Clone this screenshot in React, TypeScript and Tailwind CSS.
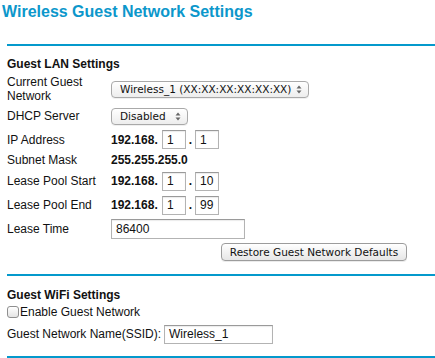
import React from 'react';

const SelectArrows = () => (
    <svg width="6" height="9" viewBox="0 0 6 9" className="shrink-0">
        <path d="M3 0.5 L5.5 3.5 L0.5 3.5 Z" fill="#666" />
        <path d="M3 8.5 L5.5 5.5 L0.5 5.5 Z" fill="#666" />
    </svg>
);

const MacSelect = ({ value, width }: { value: string; width: string }) => (
    <div
        className={`${width} h-[17px] flex items-center justify-between pl-[8px] pr-[6px] rounded-[4px] border border-[#a9a9a9] bg-gradient-to-b from-white to-[#ededed] shadow-[0_1px_0_rgba(0,0,0,0.06)] text-[10.5px] text-[#111] leading-none`}
        style={{ fontFamily: '"DejaVu Sans", Verdana, sans-serif' }}
    >
        <span>{value}</span>
        <SelectArrows />
    </div>
);

const TextBox = ({ value, width, height = 'h-[19px]' }: { value: string; width: string; height?: string }) => (
    <div className={`${width} ${height} flex items-center pl-[4px] border border-[#b3b3b3] border-t-[#9a9a9a] bg-white text-[12px] text-[#111] shadow-[inset_0_1px_1px_rgba(0,0,0,0.08)]`}>
        {value}
    </div>
);

const IpRow = ({ a, b }: { a: string; b: string }) => (
    <div className="flex items-center">
        <span className="font-bold w-[51px]">192.168.</span>
        <TextBox value={a} width="w-[24px]" />
        <span className="w-[9px] text-center font-bold">.</span>
        <TextBox value={b} width="w-[24px]" />
    </div>
);

const Row = ({ label, h, children }: { label: React.ReactNode; h: string; children?: React.ReactNode }) => (
    <div className={`flex items-center ${h}`}>
        <div className="w-[104px] shrink-0 leading-[14px]">{label}</div>
        <div className="flex items-center">{children}</div>
    </div>
);

export default function App() {
    return (
        <div
            className="w-[435px] h-[358px] overflow-hidden bg-white text-[12px] text-[#111]"
            style={{ fontFamily: '"Liberation Sans", Arial, Helvetica, sans-serif' }}
        >
            <h1 className="pl-[2px] pt-[2px] text-[16px] leading-[20px] font-bold text-[#0c97cb]">
                Wireless Guest Network Settings
            </h1>

            <div className="ml-[7px] mt-[22px]">
                {/* Guest LAN */}
                <div className="border-t-2 border-[#0499cc] pt-[11px]">
                    <div className="font-bold leading-[14px] mb-[4px]">Guest LAN Settings</div>
                    <Row label={<>Current Guest<br />Network</>} h="h-[28px]">
                        <MacSelect value="Wireless_1 (XX:XX:XX:XX:XX:XX)" width="w-[198px]" />
                    </Row>
                    <Row label="DHCP Server" h="h-[26px]">
                        <MacSelect value="Disabled" width="w-[77px]" />
                    </Row>
                    <Row label="IP Address" h="h-[21px]">
                        <IpRow a="1" b="1" />
                    </Row>
                    <Row label="Subnet Mask" h="h-[19px]">
                        <span className="font-bold">255.255.255.0</span>
                    </Row>
                    <Row label="Lease Pool Start" h="h-[24px]">
                        <IpRow a="1" b="10" />
                    </Row>
                    <Row label="Lease Pool End" h="h-[24px]">
                        <IpRow a="1" b="99" />
                    </Row>
                    <Row label="Lease Time" h="h-[24px]">
                        <TextBox value="86400" width="w-[134px]" height="h-[20px]" />
                    </Row>
                    <div className="h-[22px] flex items-center pl-[214px]">
                        <button
                            className="w-[186px] h-[18px] rounded-[4px] border border-[#9c9c9c] bg-gradient-to-b from-white to-[#e6e6e6] shadow-[0_1px_0_rgba(0,0,0,0.08)] text-[10.5px] text-[#111] leading-none"
                            style={{ fontFamily: '"DejaVu Sans", Verdana, sans-serif' }}
                        >
                            Restore Guest Network Defaults
                        </button>
                    </div>
                </div>

                {/* Guest WiFi */}
                <div className="mt-[11px] border-t-2 border-[#0499cc] pt-[12px]">
                    <div className="font-bold leading-[14px]">Guest WiFi Settings</div>
                    <div className="h-[20px] flex items-center">
                        <span className="w-[12px] h-[12px] mr-[1px] rounded-[3px] border border-[#8f8f8f] bg-gradient-to-b from-white to-[#e4e4e4]" />
                        <span>Enable Guest Network</span>
                    </div>
                    <div className="h-[22px] mt-[1px] flex items-center">
                        <span className="mr-[3px]">Guest Network Name(SSID):</span>
                        <TextBox value="Wireless_1" width="w-[109px]" />
                    </div>
                    <div className="mt-[11px] border-t-2 border-[#0499cc]" />
                </div>
            </div>
        </div>
    );
}
